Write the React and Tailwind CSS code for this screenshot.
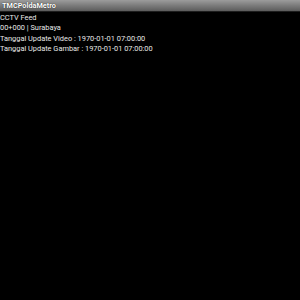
import React from "react";

const App = () => {
  return (
    <div className="w-[300px] h-[300px] bg-black flex flex-col font-['Roboto',sans-serif]">
      {/* Title bar */}
      <div className="h-[12px] bg-gradient-to-b from-[#9c9c9c] to-[#5c5c5c] border-b border-[#1e1e1e] flex items-center px-[2px]">
        <span className="text-white text-[7.3px] font-bold leading-none [text-shadow:0_0_1px_#000]">
          TMCPoldaMetro
        </span>
      </div>

      {/* Info */}
      <div className="flex flex-col text-[#e8e8e8] text-[7.4px] leading-[10.3px] pt-[1px]">
        <span>CCTV Feed</span>
        <span>00+000 | Surabaya</span>
        <span>Tanggal Update Video : 1970-01-01 07:00:00</span>
        <span>Tanggal Update Gambar : 1970-01-01 07:00:00</span>
      </div>
    </div>
  );
};

export default App;
